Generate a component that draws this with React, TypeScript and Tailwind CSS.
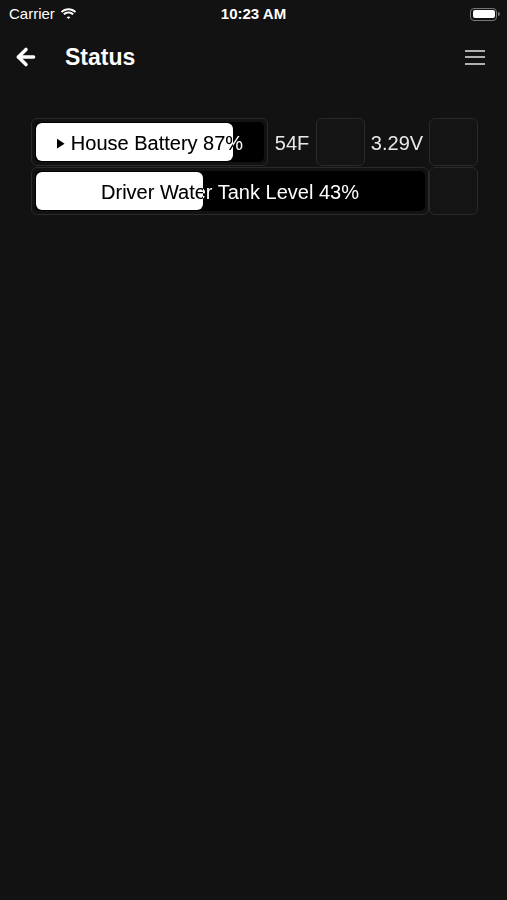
import { ArrowLeft } from "lucide-react";

const font = { fontFamily: '"Liberation Sans", Arial, sans-serif' };

function StatusBar() {
  return (
    <div className="relative flex h-[28px] items-center pl-[9px] pr-[7px] text-[15px] text-white">
      <div className="flex items-center gap-[5px]">
        <span>Carrier</span>
        <svg width="17" height="12" viewBox="0 0 17 12" fill="white">
          <path d="M8.5 2.2c2.4 0 4.6.9 6.3 2.5l1.3-1.3C14.1 1.4 11.4.3 8.5.3S2.9 1.4.9 3.4l1.3 1.3C3.9 3.1 6.1 2.2 8.5 2.2z" />
          <path d="M8.5 5.4c1.5 0 2.9.6 4 1.6l1.3-1.3C12.4 4.3 10.5 3.5 8.5 3.5S4.6 4.3 3.2 5.7L4.5 7c1.1-1 2.5-1.6 4-1.6z" />
          <path d="M8.5 8.5c.7 0 1.3.3 1.8.7l-1.8 1.9-1.8-1.9c.5-.4 1.1-.7 1.8-.7z" />
        </svg>
      </div>
      <span className="absolute left-1/2 -translate-x-1/2 font-semibold">10:23 AM</span>
      <div className="ml-auto flex items-center">
        <div className="flex h-[13px] w-[27px] items-center rounded-[4px] border border-[#777] p-[1.5px]">
          <div className="h-full w-full rounded-[2px] bg-white" />
        </div>
        <div className="ml-[1px] h-[4px] w-[2px] rounded-r-sm bg-[#777]" />
      </div>
    </div>
  );
}

function NavBar() {
  return (
    <div className="flex h-[58px] items-center px-[13px]">
      <ArrowLeft className="h-[26px] w-[26px] text-white" strokeWidth={3.2} />
      <span className="ml-[26px] text-[23px] font-bold text-white">Status</span>
      <div className="ml-auto mr-[9px] flex w-[20px] flex-col gap-[4.5px]">
        <div className="h-[2px] bg-[#b0b0b0]" />
        <div className="h-[2px] bg-[#b0b0b0]" />
        <div className="h-[2px] bg-[#b0b0b0]" />
      </div>
    </div>
  );
}

function Gauge({ label, percent, arrow }: { label: string; percent: number; arrow?: boolean }) {
  return (
    <div className="h-full rounded-md border border-[#2a2a2a] p-[3px]">
      <div className="relative h-full overflow-hidden rounded-[5px] bg-black p-[1px]">
        <div className="h-full rounded-[6px] bg-white" style={{ width: `${percent}%` }} />
        <div className="absolute inset-0 flex items-center justify-center pt-[2px] text-[20px] text-white mix-blend-difference">
          {arrow ? <span className="mr-[5px] scale-x-75 text-[13px]">▶</span> : null}
          {label}
        </div>
      </div>
    </div>
  );
}

function EmptyBox() {
  return <div className="h-full w-[49px] rounded-md border border-[#2a2a2a] bg-[#141414]" />;
}

export default function App() {
  return (
    <div className="h-[900px] w-[507px] bg-[#121212]" style={font}>
      <StatusBar />
      <NavBar />
      <div className="ml-[31px] mt-[32px] flex w-[447px] flex-col gap-[1px]">
        <div className="flex h-[48px] isolate">
          <div className="w-[237px]">
            <Gauge label="House Battery 87%" percent={87} arrow />
          </div>
          <div className="flex w-[48px] items-center justify-center pt-[2px] text-[20px] text-[#e8e8e8]">54F</div>
          <EmptyBox />
          <div className="flex w-[64px] items-center justify-center pt-[2px] text-[20px] text-[#e8e8e8]">3.29V</div>
          <EmptyBox />
        </div>
        <div className="flex h-[48px] isolate">
          <div className="w-[398px]">
            <Gauge label="Driver Water Tank Level 43%" percent={43} />
          </div>
          <EmptyBox />
        </div>
      </div>
    </div>
  );
}
